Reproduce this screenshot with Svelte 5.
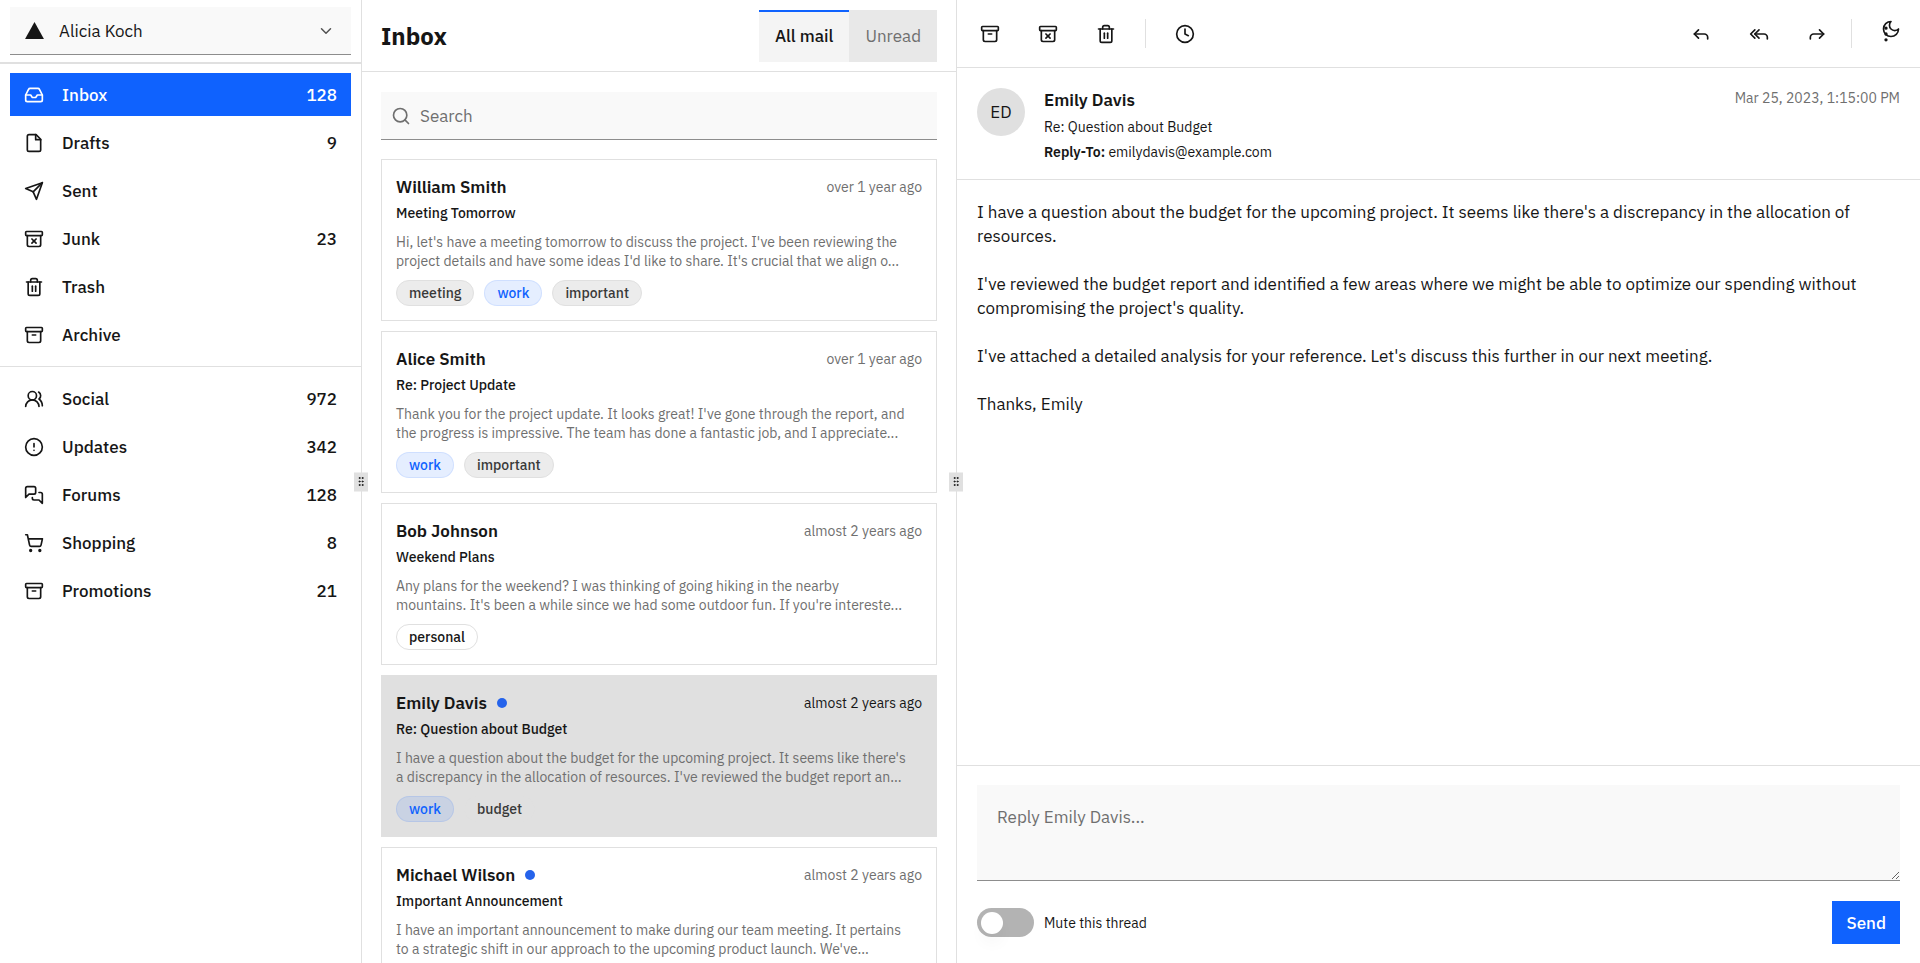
<script lang="ts">
	type Mail = {
		id: number;
		name: string;
		email: string;
		subject: string;
		date: string;
		ago: string;
		read: boolean;
		labels: string[];
		excerpt: string;
		text: string;
	};

	const icons: Record<string, string[]> = {
		inbox: [
			'M22 12h-6l-2 3h-4l-2-3H2',
			'M5.45 5.11 2 12v6a2 2 0 0 0 2 2h16a2 2 0 0 0 2-2v-6l-3.45-6.89A2 2 0 0 0 16.76 4H7.24a2 2 0 0 0-1.79 1.11z'
		],
		file: ['M14.5 2H6a2 2 0 0 0-2 2v16a2 2 0 0 0 2 2h12a2 2 0 0 0 2-2V7.5L14.5 2z', 'M14 2v6h6'],
		send: ['m22 2-7 20-4-9-9-4Z', 'M22 2 11 13'],
		junk: [
			'M3 3h18a1 1 0 0 1 1 1v3a1 1 0 0 1-1 1H3a1 1 0 0 1-1-1V4a1 1 0 0 1 1-1z',
			'M4 8v11a2 2 0 0 0 2 2h12a2 2 0 0 0 2-2V8',
			'm9.5 17 5-5',
			'm9.5 12 5 5'
		],
		trash: [
			'M3 6h18',
			'M19 6v14c0 1-1 2-2 2H7c-1 0-2-1-2-2V6',
			'M8 6V4c0-1 1-2 2-2h4c1 0 2 1 2 2v2',
			'M10 11v6',
			'M14 11v6'
		],
		archive: [
			'M3 3h18a1 1 0 0 1 1 1v3a1 1 0 0 1-1 1H3a1 1 0 0 1-1-1V4a1 1 0 0 1 1-1z',
			'M4 8v11a2 2 0 0 0 2 2h12a2 2 0 0 0 2-2V8',
			'M10 12h4'
		],
		users: [
			'M18 21a8 8 0 0 0-16 0',
			'M15 8a5 5 0 1 1-10 0a5 5 0 1 1 10 0z',
			'M22 20c0-3.37-2-6.5-4-8a5 5 0 0 0-.45-8.3'
		],
		alert: ['M22 12a10 10 0 1 1-20 0a10 10 0 1 1 20 0z', 'M12 8v4', 'M12 16h.01'],
		forums: [
			'M14 9a2 2 0 0 1-2 2H6l-4 4V4a2 2 0 0 1 2-2h8a2 2 0 0 1 2 2z',
			'M18 9h2a2 2 0 0 1 2 2v11l-4-4h-6a2 2 0 0 1-2-2v-1'
		],
		cart: [
			'M9 21a1 1 0 1 1-2 0a1 1 0 1 1 2 0z',
			'M20 21a1 1 0 1 1-2 0a1 1 0 1 1 2 0z',
			'M2.05 2.05h2l2.66 12.42a2 2 0 0 0 2 1.58h9.78a2 2 0 0 0 1.95-1.57l1.65-7.43H5.12'
		],
		clock: ['M22 12a10 10 0 1 1-20 0a10 10 0 1 1 20 0z', 'M12 6v6l4 2'],
		reply: ['m9 17-5-5 5-5', 'M20 18v-2a4 4 0 0 0-4-4H4'],
		replyAll: ['m7 17-5-5 5-5', 'm12 17-5-5 5-5', 'M22 18v-2a4 4 0 0 0-4-4H7'],
		forward: ['m15 17 5-5-5-5', 'M4 18v-2a4 4 0 0 1 4-4h12'],
		moon: ['M12 3a6 6 0 0 0 9 9 9 9 0 1 1-9-9Z'],
		more: [
			'M13 5a1 1 0 1 1-2 0a1 1 0 1 1 2 0z',
			'M13 12a1 1 0 1 1-2 0a1 1 0 1 1 2 0z',
			'M13 19a1 1 0 1 1-2 0a1 1 0 1 1 2 0z'
		],
		search: ['M19 11a8 8 0 1 1-16 0a8 8 0 1 1 16 0z', 'm21 21-4.3-4.3'],
		chevron: ['m6 9 6 6 6-6'],
		grip: [
			'M10 5a1 1 0 1 1-2 0a1 1 0 1 1 2 0z',
			'M10 12a1 1 0 1 1-2 0a1 1 0 1 1 2 0z',
			'M10 19a1 1 0 1 1-2 0a1 1 0 1 1 2 0z',
			'M16 5a1 1 0 1 1-2 0a1 1 0 1 1 2 0z',
			'M16 12a1 1 0 1 1-2 0a1 1 0 1 1 2 0z',
			'M16 19a1 1 0 1 1-2 0a1 1 0 1 1 2 0z'
		]
	};

	const primaryLinks = [
		{ title: 'Inbox', label: '128', icon: 'inbox' },
		{ title: 'Drafts', label: '9', icon: 'file' },
		{ title: 'Sent', label: '', icon: 'send' },
		{ title: 'Junk', label: '23', icon: 'junk' },
		{ title: 'Trash', label: '', icon: 'trash' },
		{ title: 'Archive', label: '', icon: 'archive' }
	];

	const secondaryLinks = [
		{ title: 'Social', label: '972', icon: 'users' },
		{ title: 'Updates', label: '342', icon: 'alert' },
		{ title: 'Forums', label: '128', icon: 'forums' },
		{ title: 'Shopping', label: '8', icon: 'cart' },
		{ title: 'Promotions', label: '21', icon: 'archive' }
	];

	const mails: Mail[] = [
		{
			id: 1,
			name: 'William Smith',
			email: 'williamsmith@example.com',
			subject: 'Meeting Tomorrow',
			date: 'Oct 22, 2023, 9:00:00 AM',
			ago: 'over 1 year ago',
			read: true,
			labels: ['meeting', 'work', 'important'],
			excerpt:
				"Hi, let's have a meeting tomorrow to discuss the project. I've been reviewing the project details and have some ideas I'd like to share. It's crucial that we align o...",
			text: "Hi, let's have a meeting tomorrow to discuss the project. I've been reviewing the project details and have some ideas I'd like to share. It's crucial that we align on our next steps to ensure the project's success."
		},
		{
			id: 2,
			name: 'Alice Smith',
			email: 'alicesmith@example.com',
			subject: 'Re: Project Update',
			date: 'Oct 22, 2023, 10:30:00 AM',
			ago: 'over 1 year ago',
			read: true,
			labels: ['work', 'important'],
			excerpt:
				"Thank you for the project update. It looks great! I've gone through the report, and the progress is impressive. The team has done a fantastic job, and I appreciate...",
			text: "Thank you for the project update. It looks great! I've gone through the report, and the progress is impressive. The team has done a fantastic job, and I appreciate the hard work everyone has put in."
		},
		{
			id: 3,
			name: 'Bob Johnson',
			email: 'bobjohnson@example.com',
			subject: 'Weekend Plans',
			date: 'Apr 10, 2023, 11:45:00 AM',
			ago: 'almost 2 years ago',
			read: true,
			labels: ['personal'],
			excerpt:
				"Any plans for the weekend? I was thinking of going hiking in the nearby mountains. It's been a while since we had some outdoor fun. If you're intereste...",
			text: "Any plans for the weekend? I was thinking of going hiking in the nearby mountains. It's been a while since we had some outdoor fun. If you're interested, let me know, and we can plan the details."
		},
		{
			id: 4,
			name: 'Emily Davis',
			email: 'emilydavis@example.com',
			subject: 'Re: Question about Budget',
			date: 'Mar 25, 2023, 1:15:00 PM',
			ago: 'almost 2 years ago',
			read: false,
			labels: ['work', 'budget'],
			excerpt:
				"I have a question about the budget for the upcoming project. It seems like there's a discrepancy in the allocation of resources. I've reviewed the budget report an...",
			text: "I have a question about the budget for the upcoming project. It seems like there's a discrepancy in the allocation of resources.\n\nI've reviewed the budget report and identified a few areas where we might be able to optimize our spending without compromising the project's quality.\n\nI've attached a detailed analysis for your reference. Let's discuss this further in our next meeting.\n\nThanks, Emily"
		},
		{
			id: 5,
			name: 'Michael Wilson',
			email: 'michaelwilson@example.com',
			subject: 'Important Announcement',
			date: 'Mar 10, 2023, 3:00:00 PM',
			ago: 'almost 2 years ago',
			read: false,
			labels: ['meeting', 'work', 'important'],
			excerpt:
				"I have an important announcement to make during our team meeting. It pertains to a strategic shift in our approach to the upcoming product launch. We've...",
			text: "I have an important announcement to make during our team meeting. It pertains to a strategic shift in our approach to the upcoming product launch. We've received valuable feedback from our beta testers, and I believe it's time to make some adjustments."
		}
	];

	let folder = $state('Inbox');
	let tab = $state('all');
	let query = $state('');
	let selectedId = $state(4);
	let muted = $state(false);
	let reply = $state('');

	const selected = $derived(mails.find((m) => m.id === selectedId) ?? mails[0]);
	const visible = $derived(
		mails.filter(
			(m) =>
				(tab === 'all' || !m.read) &&
				(m.name + m.subject + m.text).toLowerCase().includes(query.toLowerCase())
		)
	);

	function initials(name: string) {
		return name
			.split(' ')
			.map((part) => part[0])
			.join('');
	}
</script>

{#snippet icon(name: string)}
	<svg class="icon" viewBox="0 0 24 24" aria-hidden="true">
		{#each icons[name] as d}
			<path {d} />
		{/each}
	</svg>
{/snippet}

{#snippet links(items: typeof primaryLinks)}
	<nav class="nav">
		{#each items as link (link.title)}
			<a
				href="#{link.title.toLowerCase()}"
				class="nav-link"
				class:active={folder === link.title}
				onclick={() => (folder = link.title)}
			>
				{@render icon(link.icon)}
				<span>{link.title}</span>
				<span class="count">{link.label}</span>
			</a>
		{/each}
	</nav>
{/snippet}

{#snippet tool(name: string, label: string)}
	<button class="tool" aria-label={label}>{@render icon(name)}</button>
{/snippet}

<div class="mail">
	<aside class="sidebar">
		<div class="account">
			<label class="account-field">
				<svg class="logo" viewBox="0 0 20 18" aria-hidden="true"><path d="M10 0 20 18H0z" /></svg>
				<select aria-label="Select account">
					<option>Alicia Koch</option>
				</select>
				{@render icon('chevron')}
			</label>
		</div>
		{@render links(primaryLinks)}
		{@render links(secondaryLinks)}
		<div class="handle">{@render icon('grip')}</div>
	</aside>

	<section class="list-pane">
		<header class="list-header">
			<h1>Inbox</h1>
			<div class="tabs" role="tablist">
				<button role="tab" aria-selected={tab === 'all'} onclick={() => (tab = 'all')}>All mail</button>
				<button role="tab" aria-selected={tab === 'unread'} onclick={() => (tab = 'unread')}>Unread</button>
			</div>
		</header>
		<div class="list-scroll">
			<label class="search">
				{@render icon('search')}
				<input type="text" placeholder="Search" aria-label="Search" bind:value={query} />
			</label>
			{#each visible as mail (mail.id)}
				<button class="card" class:selected={mail.id === selectedId} onclick={() => (selectedId = mail.id)}>
					<span class="card-top">
						<span class="name">{mail.name}</span>
						{#if !mail.read}
							<span class="dot"></span>
						{/if}
						<span class="ago">{mail.ago}</span>
					</span>
					<span class="subject">{mail.subject}</span>
					<span class="preview">{mail.excerpt}</span>
					<span class="tags">
						{#each mail.labels as label}
							<span class="tag {label}">{label}</span>
						{/each}
					</span>
				</button>
			{/each}
		</div>
		<div class="handle">{@render icon('grip')}</div>
	</section>

	<main class="display">
		<div class="toolbar">
			{@render tool('archive', 'Archive')}
			{@render tool('junk', 'Move to junk')}
			{@render tool('trash', 'Move to trash')}
			<span class="divider wide"></span>
			{@render tool('clock', 'Snooze')}
			<span class="spacer"></span>
			{@render tool('reply', 'Reply')}
			{@render tool('replyAll', 'Reply all')}
			{@render tool('forward', 'Forward')}
			<span class="divider"></span>
			<div class="more">
				{@render tool('more', 'More')}
				<button class="theme" aria-label="Toggle theme">{@render icon('moon')}</button>
			</div>
		</div>

		<header class="message-header">
			<div class="avatar">{initials(selected.name)}</div>
			<div class="sender">
				<div class="name">{selected.name}</div>
				<div>{selected.subject}</div>
				<div><b>Reply-To:</b> {selected.email}</div>
			</div>
			<time>{selected.date}</time>
		</header>

		<div class="body">{selected.text}</div>

		<form class="reply" onsubmit={(e) => e.preventDefault()}>
			<textarea placeholder="Reply {selected.name}..." aria-label="Reply" bind:value={reply}></textarea>
			<div class="actions">
				<label class="mute">
					<input type="checkbox" role="switch" bind:checked={muted} />
					Mute this thread
				</label>
				<button class="send">Send</button>
			</div>
		</form>
	</main>
</div>

<style>
	:global(body) {
		background: #fff;
	}

	.mail {
		display: grid;
		grid-template-columns: minmax(0, 362fr) minmax(0, 595fr) minmax(0, 963fr);
		height: 100vh;
		font-family: 'IBM Plex Sans', 'Noto Sans', sans-serif;
		font-size: 17px;
		line-height: 24px;
		color: #161616;
	}

	.mail * {
		box-sizing: border-box;
	}

	button,
	input,
	select,
	textarea {
		font: inherit;
		color: inherit;
		border: 0;
		border-radius: 0;
		background: none;
		padding: 0;
		margin: 0;
		outline: 0;
	}

	button {
		cursor: pointer;
	}

	.icon {
		width: 20px;
		height: 20px;
		flex: none;
		display: block;
		fill: none;
		stroke: currentColor;
		stroke-width: 2;
		stroke-linecap: round;
		stroke-linejoin: round;
	}

	.sidebar,
	.list-pane {
		position: relative;
		border-right: 1px solid #e0e0e0;
	}

	.handle {
		position: absolute;
		z-index: 1;
		top: 50%;
		right: -7px;
		transform: translateY(-50%);
		display: flex;
		align-items: center;
		justify-content: center;
		width: 14px;
		height: 19px;
		background: #e0e0e0;
		cursor: col-resize;
	}

	.handle .icon {
		width: 12px;
		height: 12px;
	}

	/* sidebar */
	.account {
		padding: 7px 10px;
		border-bottom: 2px solid #e0e0e0;
	}

	.account-field {
		display: flex;
		align-items: center;
		height: 48px;
		padding: 0 16px 0 15px;
		background: #f9f9f9;
		border-bottom: 1px solid #8d8d8d;
	}

	.account-field select {
		flex: 1;
		appearance: none;
		padding-left: 15px;
	}

	.account-field .icon {
		width: 18px;
		height: 18px;
		color: #525252;
	}

	.logo {
		width: 19px;
		height: 17px;
		fill: #161616;
	}

	.nav {
		display: grid;
		gap: 5px;
		padding: 9px 10px 10px;
	}

	.nav + .nav {
		border-top: 1px solid #e0e0e0;
		padding-top: 10px;
	}

	.nav-link {
		display: flex;
		align-items: center;
		height: 43px;
		padding: 0 14px;
		font-weight: 500;
		color: inherit;
		text-decoration: none;
	}

	.nav-link .icon {
		margin-right: 18px;
	}

	.nav-link.active {
		background: #0f62fe;
		color: #fff;
	}

	.count {
		margin-left: auto;
	}

	/* message list */
	.list-pane {
		display: flex;
		flex-direction: column;
		min-height: 0;
	}

	.list-header {
		display: flex;
		align-items: center;
		justify-content: space-between;
		height: 72px;
		flex: none;
		padding: 0 19px;
		border-bottom: 1px solid #e0e0e0;
	}

	h1 {
		margin: 0;
		font-size: 24px;
		line-height: 32px;
		font-weight: 700;
	}

	.tabs {
		display: flex;
	}

	.tabs button {
		height: 52px;
		padding: 0 16px;
		background: #e8e8e8;
		color: #6f6f6f;
		box-shadow: none;
	}

	.tabs button[aria-selected='true'] {
		background: #f4f4f4;
		color: #161616;
		font-weight: 500;
		box-shadow: inset 0 2px #0f62fe;
	}

	.list-scroll {
		display: flex;
		flex-direction: column;
		gap: 10px;
		min-height: 0;
		padding: 20px 19px;
		overflow-y: auto;
		scrollbar-width: none;
	}

	.search {
		display: flex;
		align-items: center;
		flex: none;
		gap: 9px;
		height: 48px;
		margin-bottom: 9px;
		padding: 0 10px;
		background: #f9f9f9;
		border-bottom: 1px solid #8d8d8d;
		color: #6f6f6f;
	}

	.search input {
		flex: 1;
		color: #161616;
	}

	::placeholder {
		color: #6f6f6f;
		opacity: 1;
	}

	.card {
		display: flex;
		flex-direction: column;
		align-items: stretch;
		flex: none;
		padding: 14px;
		border: 1px solid #e0e0e0;
		font-size: 14px;
		line-height: 19px;
		text-align: left;
	}

	.card.selected {
		background: #e0e0e0;
	}

	.card-top {
		display: flex;
		align-items: center;
		height: 26px;
	}

	.name {
		font-size: 17px;
		line-height: 24px;
		font-weight: 600;
	}

	.dot {
		width: 10px;
		height: 10px;
		margin-left: 10px;
		border-radius: 50%;
		background: #2563eb;
	}

	.ago {
		margin-left: auto;
		color: #6f6f6f;
	}

	.selected .ago {
		color: #161616;
	}

	.subject {
		line-height: 26px;
		font-weight: 500;
	}

	.preview {
		margin: 7px 0 9px;
		padding-right: 13px;
		color: #6f6f6f;
	}

	.tags {
		display: flex;
		gap: 10px;
	}

	.tag {
		height: 26px;
		padding: 0 12px;
		border: 1px solid #e0e0e0;
		border-radius: 13px;
		background: rgba(224, 224, 224, 0.6);
		color: #393939;
		font-weight: 500;
		line-height: 24px;
	}

	.tag.work {
		border-color: rgba(15, 98, 254, 0.1);
		background: rgba(15, 98, 254, 0.11);
		color: #0f62fe;
	}

	.tag.personal {
		background: none;
		color: #161616;
	}

	/* open message */
	.display {
		display: flex;
		flex-direction: column;
		min-height: 0;
	}

	.toolbar {
		display: flex;
		align-items: center;
		flex: none;
		gap: 10px;
		height: 68px;
		padding: 0 10px 0 9px;
		border-bottom: 1px solid #e0e0e0;
	}

	.tool {
		display: grid;
		place-items: center;
		width: 48px;
		height: 48px;
	}

	.divider {
		width: 1px;
		height: 29px;
		background: #e0e0e0;
	}

	.divider.wide {
		margin: 0 5px;
	}

	.spacer {
		flex: 1;
	}

	/* the theme switch floats over the overflow menu */
	.more {
		position: relative;
	}

	.theme {
		position: absolute;
		top: 9px;
		right: 9px;
	}

	.message-header {
		display: flex;
		align-items: flex-start;
		gap: 19px;
		padding: 20px 20px 17px;
		border-bottom: 1px solid #e0e0e0;
		font-size: 14px;
		line-height: 20px;
	}

	.avatar {
		display: grid;
		place-items: center;
		width: 48px;
		height: 48px;
		border-radius: 50%;
		background: #e0e0e0;
		font-size: 17px;
	}

	.sender {
		display: grid;
		gap: 5px;
	}

	.sender b {
		font-weight: 600;
	}

	time {
		margin-left: auto;
		color: #6f6f6f;
	}

	.body {
		flex: 1;
		min-height: 0;
		padding: 20px;
		overflow-y: auto;
		white-space: pre-wrap;
	}

	.reply {
		padding: 19px 20px;
		border-top: 1px solid #e0e0e0;
	}

	.reply textarea {
		display: block;
		width: 100%;
		height: 96px;
		padding: 20px;
		background: #f9f9f9;
		border-bottom: 1px solid #8d8d8d;
		resize: vertical;
	}

	.actions {
		display: flex;
		align-items: center;
		justify-content: space-between;
		margin-top: 20px;
	}

	.mute {
		display: flex;
		align-items: center;
		gap: 10px;
		font-size: 14px;
	}

	.mute input {
		appearance: none;
		display: flex;
		align-items: center;
		width: 57px;
		height: 29px;
		padding: 0 4px;
		border-radius: 15px;
		background: #b3b3b3;
	}

	.mute input::before {
		content: '';
		width: 22px;
		height: 22px;
		border-radius: 50%;
		background: #fff;
		box-shadow: 0 10px 15px rgba(0, 0, 0, 0.03);
	}

	.mute input:checked {
		justify-content: flex-end;
		background: #0f62fe;
	}

	.send {
		height: 43px;
		padding: 0 14px;
		background: #0f62fe;
		color: #fff;
		font-weight: 500;
	}
</style>
